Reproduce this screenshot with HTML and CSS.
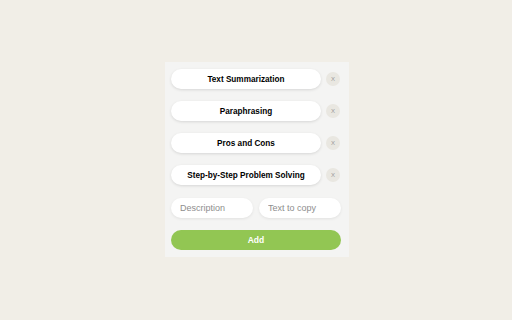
FILE: index.html
```html
<!DOCTYPE html>
<html>
<head>
<meta charset="utf-8">
<link rel="stylesheet" href="styles.css">
</head>
<body>
<div class="panel">
  <div class="row"><button class="pill">Text Summarization</button><span class="close">X</span></div>
  <div class="row"><button class="pill">Paraphrasing</button><span class="close">X</span></div>
  <div class="row"><button class="pill">Pros and Cons</button><span class="close">X</span></div>
  <div class="row"><button class="pill">Step-by-Step Problem Solving</button><span class="close">X</span></div>
  <div class="inputs">
    <input class="field" placeholder="Description">
    <input class="field" placeholder="Text to copy">
  </div>
  <button class="add">Add</button>
</div>
</body>
</html>
```
FILE: styles.css
```css
html, body {
  margin: 0;
  height: 100%;
}
body {
  background: #f1eee7;
  font-family: "Liberation Sans", Arial, sans-serif;
  display: flex;
  align-items: flex-start;
  justify-content: center;
}
.panel {
  margin-top: 62px;
  margin-left: 2px;
  background: #f4f4f3;
  width: 184px;
  box-sizing: border-box;
  padding: 7px 8px 7px 6px;
  display: flex;
  flex-direction: column;
}
.row {
  display: flex;
  align-items: center;
  gap: 5px;
  margin-bottom: 12px;
}
.pill {
  width: 150px;
  height: 20px;
  border: none;
  border-radius: 10px;
  background: #ffffff;
  box-shadow: 0 1px 3px rgba(0,0,0,0.12);
  font-family: inherit;
  font-weight: bold;
  font-size: 8.2px;
  color: #000;
  padding: 0;
}
.close {
  width: 14px;
  height: 14px;
  border-radius: 50%;
  background: #e9e7e1;
  color: #999;
  font-size: 6px;
  display: flex;
  align-items: center;
  justify-content: center;
}
.inputs {
  display: flex;
  gap: 6px;
  margin-top: 1px;
  margin-bottom: 12px;
}
.field {
  width: 82px;
  height: 20px;
  box-sizing: border-box;
  border: none;
  border-radius: 10px;
  background: #fff;
  box-shadow: 0 1px 3px rgba(0,0,0,0.08);
  padding: 0 9px;
  font-family: inherit;
  font-size: 9px;
  outline: none;
}
.field::placeholder {
  color: #8e8e8e;
}
.add {
  width: 170px;
  height: 20px;
  border: none;
  border-radius: 10px;
  background: #92c653;
  color: #fff;
  font-family: inherit;
  font-weight: bold;
  font-size: 8.5px;
  padding: 0;
}
```
